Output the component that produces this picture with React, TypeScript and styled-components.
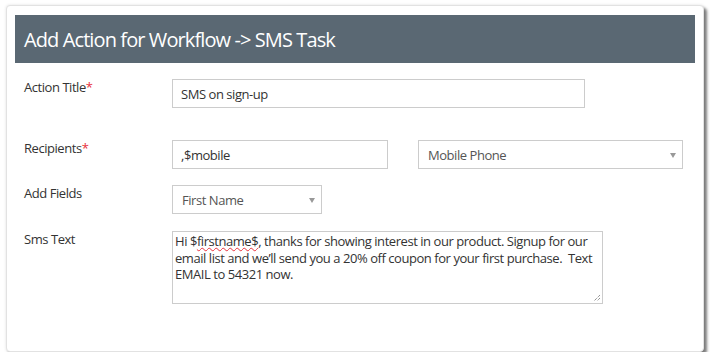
import React from 'react'
import styled, {createGlobalStyle} from 'styled-components'

const GlobalStyle = createGlobalStyle`
  html, body {
    margin: 0;
    padding: 0;
    background: #ffffff;
  }
  body {
    font-family: 'Open Sans', 'Liberation Sans', sans-serif;
    color: #333333;
  }
`

const Card = styled.div`
  box-sizing: border-box;
  margin: 5px 0 0 6px;
  width: 698px;
  height: 347px;
  padding: 9px 8px 8px 8px;
  background: #ffffff;
  border: 1px solid #e2e2e2;
  border-radius: 4px;
  box-shadow: 3px 3px 3px rgba(0, 0, 0, 0.5), 0 0 3px rgba(0, 0, 0, 0.12);
`

const Header = styled.div`
  display: flex;
  align-items: center;
  height: 48px;
  padding: 0 9px;
  background: #5a6873;
  color: #ffffff;
  font-size: 20px;
  letter-spacing: -0.9px;
  font-weight: 400;
`

const Form = styled.div`
  display: grid;
  grid-template-columns: 148px 1fr;
  padding: 16px 9px 0;
`

const Label = styled.div<{gap: number}>`
  font-size: 13px;
  line-height: 18px;
  letter-spacing: -0.45px;
  color: #333333;
  margin-top: -1px;
  padding-bottom: ${({gap}) => gap}px;
  .req {
    color: #e8313c;
  }
`

const Field = styled.div<{gap: number}>`
  display: flex;
  gap: 30px;
  align-items: flex-start;
  padding-bottom: ${({gap}) => gap}px;
`

const TextBox = styled.div<{w: number}>`
  box-sizing: border-box;
  display: flex;
  align-items: center;
  width: ${({w}) => w}px;
  height: 29px;
  padding: 0 8px;
  border: 1px solid #cccccc;
  font-size: 13px;
  letter-spacing: -0.45px;
  color: #333333;
`

const SelectBox = styled.div<{w: number}>`
  box-sizing: border-box;
  display: flex;
  align-items: center;
  justify-content: space-between;
  width: ${({w}) => w}px;
  height: 29px;
  padding: 0 6px 0 9px;
  border: 1px solid #cccccc;
  font-size: 13px;
  letter-spacing: -0.45px;
  color: #555555;
`

const Arrow = styled.span`
  width: 0;
  height: 0;
  border-left: 3.5px solid transparent;
  border-right: 3.5px solid transparent;
  border-top: 5px solid #999999;
  margin-top: 1px;
`

const TextArea = styled.div`
  position: relative;
  box-sizing: border-box;
  width: 431px;
  height: 73px;
  padding: 1px 2px;
  border: 1px solid #cccccc;
  font-size: 13px;
  line-height: 16.5px;
  letter-spacing: -0.45px;
  color: #333333;
  .spell {
    text-decoration: underline wavy #e8313c;
    text-decoration-thickness: 1px;
    text-underline-offset: 1px;
  }
`

const Grip = styled.svg`
  position: absolute;
  right: 1px;
  bottom: 1px;
`

const App: React.FC = () => {
    return (
        <>
            <GlobalStyle/>
            <Card>
                <Header>Add Action for Workflow -&gt; SMS Task</Header>
                <Form>
                    <Label gap={32}>Action Title<span className='req'>*</span></Label>
                    <Field gap={32}>
                        <TextBox w={413}>SMS on sign-up</TextBox>
                    </Field>

                    <Label gap={16}>Recipients<span className='req'>*</span></Label>
                    <Field gap={16}>
                        <TextBox w={216}>,$mobile</TextBox>
                        <SelectBox w={265}>Mobile Phone<Arrow/></SelectBox>
                    </Field>

                    <Label gap={17}>Add Fields</Label>
                    <Field gap={17}>
                        <SelectBox w={150}>First Name<Arrow/></SelectBox>
                    </Field>

                    <Label gap={0}>Sms Text</Label>
                    <Field gap={0}>
                        <TextArea>
                            Hi $<span className='spell'>firstname$</span>, thanks for showing interest in our product. Signup for our email list and we&rsquo;ll send you a 20% off coupon for your first purchase.&nbsp; Text EMAIL to 54321 now.
                            <Grip width='8' height='8' viewBox='0 0 8 8'>
                                <path d='M7 1 L1 7 M7 4 L4 7' stroke='#666' strokeWidth='1' strokeDasharray='1 1'/>
                            </Grip>
                        </TextArea>
                    </Field>
                </Form>
            </Card>
        </>
    )
}

export default App
